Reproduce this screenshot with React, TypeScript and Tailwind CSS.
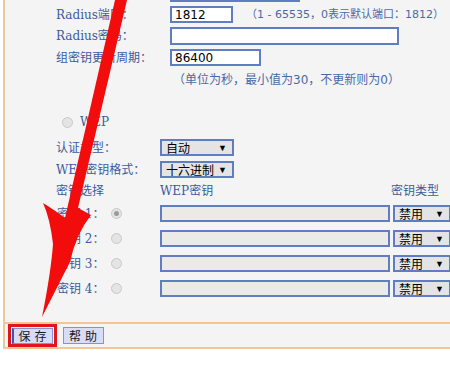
import React from 'react';

const label = "shrink-0 font-['DejaVu_Serif','Noto_Sans_CJK_SC',serif] text-[12px] text-[#3b5b9d] leading-none";
const note = "font-['DejaVu_Sans','Noto_Sans_CJK_SC',sans-serif] text-[#4a69a8] leading-none";
const field = "shrink-0 border-2 border-[#5f7dc0] h-full flex items-center px-[3px] font-['DejaVu_Sans','Noto_Sans_CJK_SC',sans-serif] text-[12px] text-black";

const Radio = ({ checked }: { checked?: boolean }) => (
  <div className="shrink-0 w-[11px] h-[11px] rounded-full border border-[#c9c9c9] bg-[#e4e4e4] flex items-center justify-center">
    {checked && <div className="w-[5px] h-[5px] rounded-full bg-[#9a9a9a]" />}
  </div>
);

const Select = ({ text, w }: { text: string; w: string }) => (
  <div className={`shrink-0 border-2 border-[#5f7dc0] bg-[#e4e4e4] h-full flex items-center justify-between pl-[4px] pr-[5px] ${w}`}>
    <span className="font-['Noto_Sans_CJK_SC',sans-serif] text-[12px] text-black leading-none">{text}</span>
    <span className="text-[9px] text-black leading-none">▼</span>
  </div>
);

const keys = ['密钥 1：', '密钥 2：', '密钥 3：', '密钥 4：'];

export default function App() {
  return (
    <div className="relative w-[450px] h-[370px] bg-white overflow-hidden">
      <div className="ml-[3px] w-[447px] h-[349px] border-l-2 border-[#e7cb9f] bg-[#f4f4f4] flex flex-col">
        <div className="flex-1 pl-[51px] overflow-hidden flex flex-col">
          {/* partial top row */}
          <div className="mt-[-15px] h-[17px] flex">
            <div className="w-[114px] shrink-0" />
            <div className={`${field} bg-white w-[130px]`} />
          </div>

          <div className="mt-[4px] h-[17px] flex items-center">
            <div className={`${label} w-[114px]`}>Radius端口：</div>
            <div className={`${field} bg-white w-[63px]`}>1812</div>
            <div className={`${note} text-[11px] ml-[13px] whitespace-nowrap`}>（1 - 65535，0表示默认端口：1812）</div>
          </div>

          <div className="mt-[4px] h-[18px] flex items-center">
            <div className={`${label} w-[114px]`}>Radius密码：</div>
            <div className={`${field} bg-white w-[229px]`} />
          </div>

          <div className="mt-[4px] h-[17px] flex items-center">
            <div className={`${label} w-[114px]`}>组密钥更新周期：</div>
            <div className={`${field} bg-white w-[91px]`}>86400</div>
          </div>

          <div className={`${note} text-[12px] mt-[6px] h-[16px] pl-[117px] flex items-center whitespace-nowrap`}>
            （单位为秒，最小值为30，不更新则为0）
          </div>

          <div className="mt-[26px] h-[16px] flex items-center pl-[6px] gap-[7px]">
            <Radio />
            <span className={label}>WEP</span>
          </div>

          <div className="mt-[9px] h-[17px] flex items-center">
            <div className={`${label} w-[104px]`}>认证类型：</div>
            <Select text="自动" w="w-[74px]" />
          </div>

          <div className="mt-[5px] h-[17px] flex items-center">
            <div className={`${label} w-[104px]`}>WEP密钥格式：</div>
            <Select text="十六进制" w="w-[74px]" />
          </div>

          <div className="mt-[5px] h-[16px] flex items-center">
            <div className={`${label} w-[104px]`}>密钥选择</div>
            <div className={`${label} w-[231px]`}>WEP密钥</div>
            <div className={label}>密钥类型</div>
          </div>

          <div className="mt-[6px] flex flex-col gap-[8px]">
            {keys.map((k, i) => (
              <div key={k} className="h-[17px] flex items-center">
                <div className={`${label} w-[55px] pl-[1px]`}>{k}</div>
                <Radio checked={i === 0} />
                <div className="w-[38px] shrink-0" />
                <div className={`${field} bg-[#ebeae6] w-[230px]`} />
                <div className="w-[3px] shrink-0" />
                <Select text="禁用" w="w-[58px]" />
              </div>
            ))}
          </div>
        </div>

        {/* button bar */}
        <div className="h-[27px] border-y-2 border-[#f5c693] flex items-center">
          <div className="ml-[3px] h-[23px] w-[49px] border-[3px] border-[#e3141c] flex items-center justify-center">
            <div className="w-[41px] h-[16px] bg-[#d9dcf7] border border-[#8793cf] border-l-2 border-l-[#3f56b0] flex items-center justify-center font-['Noto_Sans_CJK_SC',sans-serif] text-[12px] text-[#1a1a1a] tracking-[4px] pl-[3px] leading-none">
              保存
            </div>
          </div>
          <div className="ml-[6px] w-[41px] h-[17px] bg-[#d9dcf7] border border-[#8793cf] flex items-center justify-center font-['Noto_Sans_CJK_SC',sans-serif] text-[12px] text-[#1a1a1a] tracking-[4px] pl-[3px] leading-none">
            帮助
          </div>
        </div>
      </div>

      {/* red arrow overlay */}
      <svg className="absolute left-0 top-0 pointer-events-none" width="450" height="370" viewBox="0 0 450 370">
        <path
          d="M115 0 L127 0 L78 208 Q84 211 91 215 Q76 234 70 262 L42 317 Q51 272 53 244 Q50 218 43 203 Q56 211 65 218 Z"
          fill="#f20c0c"
        />
      </svg>
    </div>
  );
}
